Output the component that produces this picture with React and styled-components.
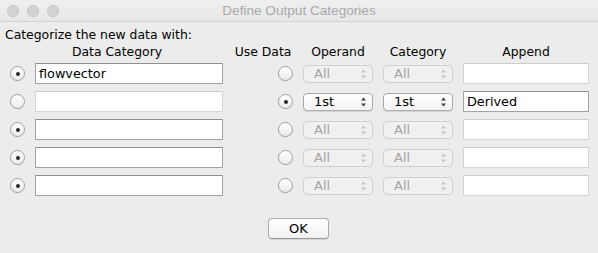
import React from "react";
import styled, { createGlobalStyle, css } from "styled-components";

const Global = createGlobalStyle`
  html, body { margin: 0; padding: 0; background: #ececec; }
  body { width: 598px; height: 253px; overflow: hidden; }
`;

const Window = styled.div`
  width: 598px;
  height: 253px;
  background: #ececec;
  font-family: "DejaVu Sans", sans-serif;
  font-size: 12.4px;
  color: #000;
  display: flex;
  flex-direction: column;
`;

const TitleBar = styled.div`
  height: 22px;
  box-sizing: border-box;
  border-bottom: 1px solid #d2d2d2;
  background: linear-gradient(#efefef, #e7e7e7);
  display: flex;
  align-items: center;
  position: relative;
`;

const Lights = styled.div`
  display: flex;
  gap: 8px;
  padding-left: 7px;
`;

const Light = styled.span`
  width: 12px;
  height: 12px;
  border-radius: 50%;
  box-sizing: border-box;
  background: #d3d3d3;
  border: 1px solid #c5c5c5;
`;

const Title = styled.div`
  position: absolute;
  left: 0;
  right: 0;
  text-align: center;
  font-family: "Liberation Sans", Arial, sans-serif;
  font-size: 13.6px;
  color: #a9a9a9;
  pointer-events: none;
`;

const Body = styled.div`
  padding: 5px 0 0 5px;
  display: flex;
  flex-direction: column;
`;

const Intro = styled.div`
  line-height: 16px;
`;

const Grid = styled.div`
  display: grid;
  grid-template-columns: 14px 188px 60px 70px 70px 126px;
  column-gap: 10px;
  row-gap: 7px;
  padding-left: 6px;
  align-items: center;
`;

const Header = styled.div`
  text-align: center;
  line-height: 16px;
  margin-top: 1px;
  margin-bottom: -4px;
  ${(p) => p.$span && css`grid-column: span ${p.$span};`}
`;

const RadioWrap = styled.span`
  width: 15px;
  height: 15px;
  box-sizing: border-box;
  border-radius: 50%;
  border: 1px solid #a0a0a0;
  background: linear-gradient(#ffffff, #ebebeb);
  box-shadow: 0 0.5px 0.5px rgba(0, 0, 0, 0.08);
  display: flex;
  align-items: center;
  justify-content: center;
  justify-self: ${(p) => (p.$end ? "end" : "start")};
  margin-left: ${(p) => (p.$end ? "0" : "-1px")};
  &::after {
    content: "";
    width: 4px;
    height: 4px;
    border-radius: 50%;
    background: #2a2a2a;
    display: ${(p) => (p.$on ? "block" : "none")};
  }
`;

const Field = styled.div`
  height: 21px;
  box-sizing: border-box;
  background: #fff;
  border: 1px solid ${(p) => (p.$disabled ? "#d4d4d4" : "#a3a3a3")};
  border-top-color: ${(p) => (p.$disabled ? "#cbcbcb" : "#8f8f8f")};
  padding: 0 3px;
  font-size: 12.8px;
  line-height: 19px;
  white-space: nowrap;
  overflow: hidden;
`;

const Popup = styled.div`
  height: 18px;
  box-sizing: border-box;
  border-radius: 4px;
  border: 1px solid ${(p) => (p.$disabled ? "#d0d0d0" : "#ababab")};
  background: ${(p) =>
    p.$disabled ? "#f0f0f0" : "linear-gradient(#ffffff, #f3f3f3)"};
  box-shadow: ${(p) => (p.$disabled ? "none" : "0 1px 1px rgba(0,0,0,0.12)")};
  color: ${(p) => (p.$disabled ? "#a5a5a5" : "#000")};
  display: flex;
  align-items: center;
  justify-content: space-between;
  padding: 0 5px 0 10px;
  font-size: 13px;
  line-height: 16px;
`;

const Arrows = ({ disabled }) => (
  <svg width="7" height="10" viewBox="0 0 7 10">
    <path d="M3.5 0.5 L6 3.5 L1 3.5 Z" fill={disabled ? "#c4c4c4" : "#3c3c3c"} />
    <path d="M3.5 9.5 L6 6.5 L1 6.5 Z" fill={disabled ? "#c4c4c4" : "#3c3c3c"} />
  </svg>
);

const Footer = styled.div`
  display: flex;
  justify-content: center;
  padding-top: 22px;
  padding-right: 5px;
`;

const Button = styled.div`
  width: 61px;
  height: 21px;
  box-sizing: border-box;
  border-radius: 4px;
  border: 1px solid #acacac;
  border-bottom-color: #999;
  background: linear-gradient(#ffffff, #f1f1f1);
  box-shadow: 0 1px 1px rgba(0, 0, 0, 0.1);
  display: flex;
  align-items: center;
  justify-content: center;
  font-size: 13px;
  margin-left: -1px;
`;

const rows = [
  { left: true, name: "flowvector", use: false },
  { left: false, name: "", use: true, op: "1st", cat: "1st", append: "Derived" },
  { left: true, name: "", use: false },
  { left: true, name: "", use: false },
  { left: true, name: "", use: false },
];

export default function App() {
  return (
    <Window>
      <Global />
      <TitleBar>
        <Lights>
          <Light />
          <Light />
          <Light />
        </Lights>
        <Title>Define Output Categories</Title>
      </TitleBar>
      <Body>
        <Intro>Categorize the new data with:</Intro>
        <Grid>
          <Header $span={2}>Data Category</Header>
          <Header>Use Data</Header>
          <Header>Operand</Header>
          <Header>Category</Header>
          <Header>Append</Header>
          {rows.map((r, i) => (
            <React.Fragment key={i}>
              <RadioWrap $on={r.left} />
              <Field $disabled={!r.left}>{r.name}</Field>
              <RadioWrap $on={r.use} $end />
              <Popup $disabled={!r.use}>
                <span>{r.op || "All"}</span>
                <Arrows disabled={!r.use} />
              </Popup>
              <Popup $disabled={!r.use}>
                <span>{r.cat || "All"}</span>
                <Arrows disabled={!r.use} />
              </Popup>
              <Field $disabled={!r.use}>{r.append || ""}</Field>
            </React.Fragment>
          ))}
        </Grid>
        <Footer>
          <Button>OK</Button>
        </Footer>
      </Body>
    </Window>
  );
}
